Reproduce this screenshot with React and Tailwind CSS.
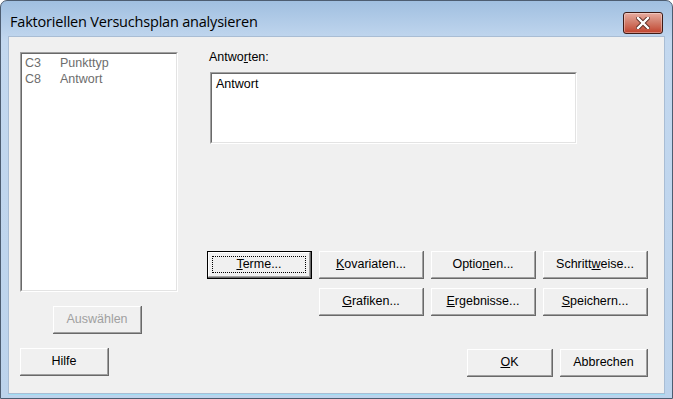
import React from "react";

const font = { fontFamily: '"Liberation Sans", Arial, sans-serif' };

// classic raised button; `isDefault` adds the black frame and focus rect
function Btn({ children, w = "w-[105px]", isDefault = false, disabled = false }) {
    const inner = (
        <div className="h-full w-full border-t border-l border-r border-b border-t-white border-l-white border-r-[#a0a0a0] border-b-[#a0a0a0] bg-[#f0f0f0] flex items-center justify-center">
            {isDefault ? (
                <div className="h-[calc(100%-6px)] w-[calc(100%-6px)] border border-dotted border-black flex items-center justify-center">
                    {children}
                </div>
            ) : children}
        </div>
    );
    return (
        <div
            className={`${w} h-[28px] text-[12.5px] ${disabled ? "text-[#a0a0a0]" : "text-black"} ${isDefault ? "border border-black" : ""}`}
        >
            <div className="h-full w-full border-r border-b border-r-[#696969] border-b-[#696969]">
                {inner}
            </div>
        </div>
    );
}

function Sunken({ className, children }) {
    return (
        <div className={`${className} border-t border-l border-t-[#a0a0a0] border-l-[#a0a0a0] border-r border-b border-r-white border-b-white`}>
            <div className="h-full w-full border-t border-l border-t-[#696969] border-l-[#696969] border-r border-b border-r-[#e3e3e3] border-b-[#e3e3e3] bg-white">
                {children}
            </div>
        </div>
    );
}

export default function App() {
    return (
        <div className="w-[673px] h-[399px] overflow-hidden bg-white" style={font}>
            <div className="w-full h-full rounded-t-[7px] border border-[#4d5d71] bg-gradient-to-b from-[#a0bfe0] via-[#c3d8ef] via-[40px] to-[#bcd3ec] flex flex-col">
                {/* title bar */}
                <div className="h-[35px] shrink-0 flex items-start justify-between pl-[9px] pr-[9px]">
                    <div className="pt-[10px] text-[14.5px] text-black" style={{ fontFamily: '"Open Sans", "Noto Sans", sans-serif', letterSpacing: "-0.2px" }}>
                        Faktoriellen Versuchsplan analysieren
                    </div>
                    <div className="mt-[11px] w-[40px] h-[22px] rounded-[3px] border border-[#3e1a15] bg-gradient-to-b from-[#e8ab9f] via-[#d27e6c] via-[45%] to-[#c0402b] flex items-center justify-center shadow-[inset_0_0_0_1px_rgba(255,255,255,0.35)]">
                        <svg width="14" height="12" viewBox="0 0 14 12">
                            <path d="M2 1 L12 11 M12 1 L2 11" stroke="#5a2a22" strokeWidth="4.2" strokeLinecap="square" />
                            <path d="M2 1 L12 11 M12 1 L2 11" stroke="#ffffff" strokeWidth="2.4" strokeLinecap="square" />
                        </svg>
                    </div>
                </div>

                {/* client area */}
                <div className="mx-[7px] h-[358px] border border-[#a9bdd4] bg-[#f0f0f0] flex">
                    {/* left column */}
                    <div className="pl-[11px] pt-[15px] flex flex-col">
                        <Sunken className="w-[158px] h-[240px]">
                            <div className="pt-[1px] pl-[3px] text-[12.5px] text-[#6d6d6d] leading-[16px]">
                                <div className="flex"><span className="w-[35px]">C3</span><span>Punkttyp</span></div>
                                <div className="flex"><span className="w-[35px]">C8</span><span>Antwort</span></div>
                            </div>
                        </Sunken>
                        <div className="mt-[14px] ml-[33px]">
                            <Btn w="w-[89px]" disabled>Auswählen</Btn>
                        </div>
                        <div className="mt-[14px]">
                            <Btn w="w-[89px]">Hilfe</Btn>
                        </div>
                    </div>

                    {/* right column */}
                    <div className="ml-[29px] pt-[12px] flex flex-col">
                        <div className="ml-[2px] text-[12.5px] text-black leading-[16px]">
                            Antwo<u>r</u>ten:
                        </div>
                        <Sunken className="mt-[7px] ml-[3px] w-[367px] h-[72px]">
                            <div className="pt-[2px] pl-[4px] text-[12.5px] text-black leading-[16px]">Antwort</div>
                        </Sunken>

                        <div className="mt-[107px] grid grid-cols-[105px_105px_105px_105px] gap-x-[7px] gap-y-[9px]">
                            <Btn isDefault><span><u>T</u>erme...</span></Btn>
                            <Btn><span><u>K</u>ovariaten...</span></Btn>
                            <Btn><span>Optio<u>n</u>en...</span></Btn>
                            <Btn><span>Schritt<u>w</u>eise...</span></Btn>
                            <div />
                            <Btn><span><u>G</u>rafiken...</span></Btn>
                            <Btn><span><u>E</u>rgebnisse...</span></Btn>
                            <Btn><span><u>S</u>peichern...</span></Btn>
                        </div>

                        <div className="mt-[33px] flex justify-end gap-[7px] pr-[0px]">
                            <Btn w="w-[86px]"><span><u>O</u>K</span></Btn>
                            <Btn w="w-[88px]">Abbrechen</Btn>
                        </div>
                    </div>
                </div>
                <div className="mx-[7px] h-[1px] bg-[#9fdcf2]" />
            </div>
        </div>
    );
}
